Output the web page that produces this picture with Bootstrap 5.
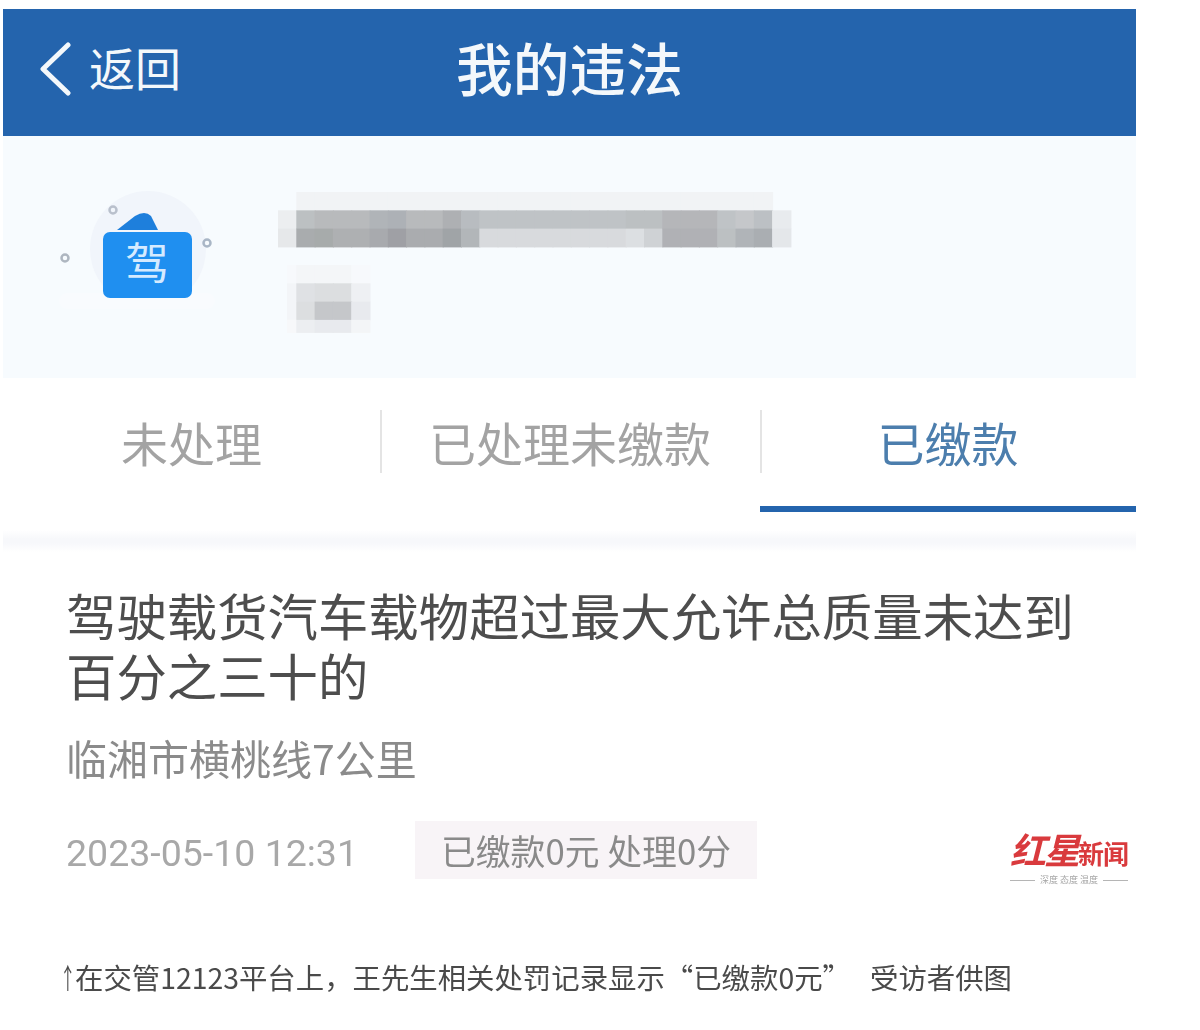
<!DOCTYPE html>
<html lang="zh">
<head>
  <meta charset="UTF-8">
  <meta name="viewport" content="width=device-width, initial-scale=1.0">
  <title>我的违法</title>
  <link href="https://cdn.jsdelivr.net/npm/bootstrap@5.3.0/dist/css/bootstrap.min.css" rel="stylesheet">

  <style>
    html, body {
      height: 1030px;
      overflow: hidden;
    }

    body {
      background-color: #fff;
      font-family: "Noto Sans CJK SC", "Liberation Sans", sans-serif;
      padding-top: 9px;
    }

    .shot {
      width: 1133px;
      margin-left: 3px;
      filter: blur(.6px);
    }

    .top-bar {
      background-color: #2464ad;
      height: 127px;
      color: #f4f8fb;
      display: grid;
      grid-template-columns: 1fr auto 1fr;
      padding-bottom: 8px;
    }

    .back-link {
      padding-left: 35px;
      min-width: 0;
    }

    .back-text {
      font-size: 46px;
      margin-left: 17px;
      margin-bottom: 6px;
      line-height: 1;
    }

    .top-title {
      font-size: 56.7px;
      line-height: 1;
      font-weight: 500;
      margin-bottom: 4px;
    }

    .profile-box {
      background-color: #f7fbfe;
      height: 242px;
      padding: 67px 0 0 48px;
    }

    .badge-icon {
      overflow: visible;
    }

    .mosaic {
      margin-left: 51px;
      margin-top: -11px;
    }

    .tab-row {
      height: 134px;
      padding-top: 32px;
    }

    .tab-cell {
      flex: 0 0 auto;
      width: 377px;
      height: 102px;
      font-size: 47px;
      color: #a3a3a3;
      text-align: center;
      position: relative;
      line-height: 64px;
    }

    .tab-cell + .tab-cell {
      width: 380px;
    }

    .tab-cell + .tab-cell::before {
      content: "";
      position: absolute;
      left: 0;
      top: 0;
      height: 63px;
      border-left: 2px solid #e4e4e4;
    }

    .tab-cell + .tab-on {
      width: 376px;
      color: #4c7ead;
      border-bottom: 6px solid #2464ad;
    }

    .gap-strip {
      height: 40px;
      background: linear-gradient(#fff 0, #fff 18px, #f7f8fb 27px, #f7f8fb 31px, #fff 40px);
    }

    .ticket {
      padding: 31px 0 0 63px;
      position: relative;
    }

    .ticket-title {
      font-size: 50.4px;
      line-height: 60px;
      color: #4d4d4d;
      margin: 0;
      font-weight: 400;
      padding-top: 2px;
    }

    .ticket-place {
      font-size: 41px;
      line-height: 50px;
      color: #8b8b8b;
      margin-top: 27px;
    }

    .ticket-date {
      font-family: Roboto, "Liberation Sans", sans-serif;
      font-size: 37.5px;
      color: #a8a8a8;
      width: 349px;
      white-space: nowrap;
      padding-top: 3px;
    }

    .ticket-tag {
      background-color: #f8f4f7;
      color: #8a8a8a;
      font-size: 34.8px;
      width: 342px;
      height: 58px;
      line-height: 58px;
      text-align: center;
      white-space: nowrap;
      margin-top: -3px;
    }

    .ticket-meta {
      margin-top: 40px;
    }

    .logo-mark {
      position: absolute;
      right: 8px;
      bottom: -4px;
      width: 118px;
      text-align: center;
    }

    .logo-name {
      color: #d93a3d;
      line-height: 30px;
      white-space: nowrap;
      font-family: "Liberation Serif", "Noto Sans CJK SC", serif;
    }

    .logo-big {
      font-size: 36px;
      font-weight: 700;
      font-style: italic;
      letter-spacing: -2px;
    }

    .logo-small {
      font-size: 26px;
      font-weight: 700;
      letter-spacing: -1px;
    }

    .logo-sub {
      font-size: 9px;
      line-height: 10px;
      color: #a5a5a5;
      gap: 5px;
      margin-top: 1px;
    }

    .logo-sub i {
      flex: 1 1 0;
      border-top: 1px solid #b5b5b5;
    }

    .caption {
      margin: 78px 0 0 57px;
      font-size: 28.4px;
      line-height: 36px;
      color: #4a4a4a;
      white-space: pre;
    }

    .caption-arrow {
      display: inline-block;
      width: 15px;
      transform: scaleX(.55);
      transform-origin: left;
    }
  </style>
</head>
<body>
  <div class="shot">
    <div class="top-bar align-items-center">
      <div class="back-link d-flex align-items-center">
        <svg width="34" height="54" viewBox="0 0 34 54">
          <path d="M30 3 L5 27 L30 51" fill="none" stroke="#f4f8fb" stroke-width="5" stroke-linecap="round" stroke-linejoin="round"/>
        </svg>
        <span class="back-text">返回</span>
      </div>
      <div class="top-title">我的违法</div>
      <div></div>
    </div>

    <div class="profile-box d-flex align-items-start">
      <svg class="badge-icon" width="176" height="124" viewBox="0 0 176 124">
        <circle cx="97" cy="46" r="58" fill="#f1f5fb"/>
        <rect x="8" y="90" width="156" height="16" rx="8" fill="#f9fbfe"/>
        <path d="M66 27 L84 13 Q94 7 100 13 L107 27 Z" fill="#1e7fdc"/>
        <rect x="52" y="29" width="89" height="66" rx="7" fill="#1f8ff0"/>
        <text x="96" y="77" text-anchor="middle" font-size="44" fill="#d5eaff" font-family="Noto Sans CJK SC">驾</text>
        <circle cx="62" cy="7" r="3.5" fill="none" stroke="#b9c0cc" stroke-width="2.5"/>
        <circle cx="156" cy="40" r="3.5" fill="none" stroke="#a9b6c6" stroke-width="2.5"/>
        <circle cx="14" cy="55" r="3.5" fill="none" stroke="#aeb6c0" stroke-width="2.5"/>
      </svg>
      <svg class="mosaic" id="mosaic" width="520" height="150" viewBox="0 0 520 150"></svg>
    </div>

    <div class="tab-row d-flex">
      <div class="tab-cell">未处理</div>
      <div class="tab-cell">已处理未缴款</div>
      <div class="tab-cell tab-on">已缴款</div>
    </div>
    <div class="gap-strip"></div>

    <div class="ticket">
      <h1 class="ticket-title">驾驶载货汽车载物超过最大允许总质量未达到<br>百分之三十的</h1>
      <div class="ticket-place">临湘市横桃线7公里</div>
      <div class="ticket-meta d-flex align-items-center">
        <span class="ticket-date">2023-05-10 12:31</span>
        <span class="ticket-tag">已缴款0元 处理0分</span>
      </div>
      <div class="logo-mark">
        <div class="logo-name"><span class="logo-big">红星</span><span class="logo-small">新闻</span></div>
        <div class="logo-sub d-flex align-items-center"><i></i><span>深度 态度 温度</span><i></i></div>
      </div>
    </div>

    <div class="caption"><span class="caption-arrow">↑</span>在交管12123平台上，王先生相关处罚记录显示“已缴款0元”   受访者供图</div>
  </div>

  <script>
    // 打码块，每格约 18.3px
    const rowA = ["#eceef0","#bcc0c2","#b8babc","#b8babc","#b8babc","#b0b4b8","#adb1b6","#b8babc","#b8babc","#aeb0b3","#b8bcc0","#bfc3c6","#bfc3c6","#bfc3c6","#bfc3c6","#bfc3c6","#bfc3c6","#bfc3c6","#bfc3c6","#bcc0c2","#bcc0c2","#b5b6b9","#b5b6b9","#b5b6b9","#bfc3c6","#c5c7ca","#bcc0c4","#e8ebee"];
    const rowB = ["#e6e8ea","#a9acae","#a7abab","#aeb0b2","#aeb0b2","#a8aaae","#9fa0a5","#aaacaf","#aaacaf","#a0a4a7","#b2b6b9","#d8dadd","#d8dadd","#d8dadd","#d8dadd","#d8dadd","#d8dadd","#d8dadd","#d8dadd","#dcdfe2","#cfd2d5","#b0b1b5","#b0b1b5","#b0b1b5","#bcc0c2","#b0b4b8","#aaaeb2","#e4e7ea"];
    const smallRows = [
      ["#f7f9fc","#f4f6f8","#f4f6f8","#f4f6f8","#f7f9fc"],
      ["#f3f5f8","#dfe1e4","#dcdee0","#dcdee0","#eef0f3"],
      ["#f3f5f8","#dcdee0","#c5c7ca","#c5c7ca","#e8eaee"],
      ["#f7f8fa","#eceef1","#e8eaee","#e8eaee","#f3f5f7"]
    ];
    const cell = 18.3;
    let rects = "";
    rowA.forEach((c, i) => {
      if (i > 0 && i < 27) rects += `<rect x="${i * cell}" y="0" width="${cell + 1}" height="18.3" fill="#f1f3f5"/>`;
      rects += `<rect x="${i * cell}" y="18.3" width="${cell + 1}" height="18.8" fill="${c}"/>`;
      rects += `<rect x="${i * cell}" y="36.6" width="${cell + 1}" height="18.8" fill="${rowB[i]}"/>`;
    });
    smallRows.forEach((row, r) => {
      row.forEach((c, i) => {
        // 第一列只露出右半格
        const x = i === 0 ? 9 : i * cell;
        const w = i === 0 ? 10 : cell + 1;
        rects += `<rect x="${x}" y="${73 + r * 18.3}" width="${w}" height="${r === 3 ? 13 : 18.8}" fill="${c}"/>`;
      });
    });
    document.getElementById("mosaic").innerHTML = rects;
  </script>

  <script src="https://cdn.jsdelivr.net/npm/bootstrap@5.3.0/dist/js/bootstrap.bundle.min.js"></script>
</body>
</html>
